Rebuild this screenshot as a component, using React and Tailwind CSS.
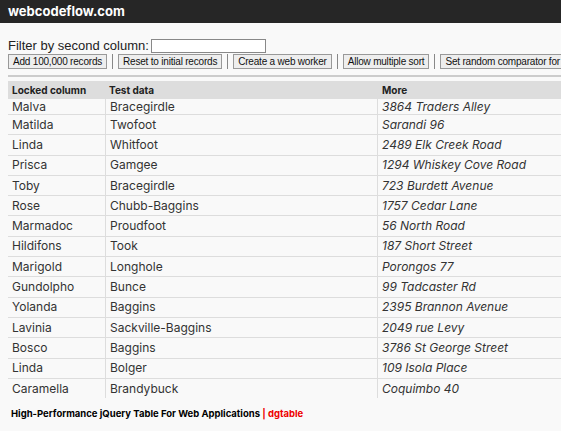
export default function App() {
  const rows = [
    ["Malva","Bracegirdle","3864 Traders Alley"],
    ["Matilda","Twofoot","Sarandi 96"],
    ["Linda","Whitfoot","2489 Elk Creek Road"],
    ["Prisca","Gamgee","1294 Whiskey Cove Road"],
    ["Toby","Bracegirdle","723 Burdett Avenue"],
    ["Rose","Chubb-Baggins","1757 Cedar Lane"],
    ["Marmadoc","Proudfoot","56 North Road"],
    ["Hildifons","Took","187 Short Street"],
    ["Marigold","Longhole","Porongos 77"],
    ["Gundolpho","Bunce","99 Tadcaster Rd"],
    ["Yolanda","Baggins","2395 Brannon Avenue"],
    ["Lavinia","Sackville-Baggins","2049 rue Levy"],
    ["Bosco","Baggins","3786 St George Street"],
    ["Linda","Bolger","109 Isola Place"],
    ["Caramella","Brandybuck","Coquimbo 40"],
  ];
  const btns = ["Add 100,000 records","Reset to initial records","Create a web worker","Allow multiple sort","Set random comparator for sort"];
  return (
    <div className="w-[561px] h-[431px] overflow-hidden bg-[#f9f9f9] text-[#333]" style={{fontFamily:"Inter, 'Liberation Sans', sans-serif"}}>
      <div className="h-[23px] bg-[#262626] flex items-center px-[8px] text-white font-bold text-[13px]">webcodeflow.com</div>
      <div className="px-[8px] pt-[16px]" style={{fontFamily:"'Liberation Sans', Arial, sans-serif"}}>
        <div className="flex items-center text-[13px] h-[14px] text-[#222]">Filter by second column:<span className="ml-[2px] w-[115px] h-[14px] border border-[#888] bg-white"></span></div>
        <div className="flex items-center whitespace-nowrap mt-[1px] text-[10px] tracking-[-0.2px]">
          {btns.map((b,i)=>(
            <div key={i} className="flex items-center shrink-0">
              {i>0 && <span className="mx-[5px] w-[1px] h-[15px] bg-[#888]"></span>}
              <span className="h-[15px] px-[4px] border border-[#999] bg-[#eee] flex items-center text-[#111]">{b}</span>
            </div>
          ))}
        </div>
        <div className="mt-[6px] h-[2px] bg-[#ccc] w-[600px]"></div>
      </div>
      <div className="ml-[8px] mt-[4px] w-[600px]">
        <div className="flex h-[18px] bg-[#ddd] text-[10px] font-bold text-[#222] items-center">
          <div className="w-[98px] pl-[4px]">Locked column</div>
          <div className="w-[272px] pl-[3px]">Test data</div>
          <div className="flex-1 pl-[4px]">More</div>
        </div>
        {rows.map((r,i)=>(
          <div key={i} className={"flex text-[12px] items-stretch " + (i===0 ? "h-[15px]" : "h-[20.3px] border-t border-[#ddd]")}>
            <div className="w-[98px] pl-[4px] flex items-center border-r border-[#ddd]">{r[0]}</div>
            <div className="w-[272px] pl-[4px] flex items-center border-r border-[#ddd]">{r[1]}</div>
            <div className="flex-1 pl-[4px] flex items-center italic">{r[2]}</div>
          </div>
        ))}
      </div>
      <div className="ml-[11px] mt-[9px] text-[9.5px] font-bold text-black">High-Performance jQuery Table For Web Applications <span className="text-[#e00]">| dgtable</span></div>
    </div>
  );
}
